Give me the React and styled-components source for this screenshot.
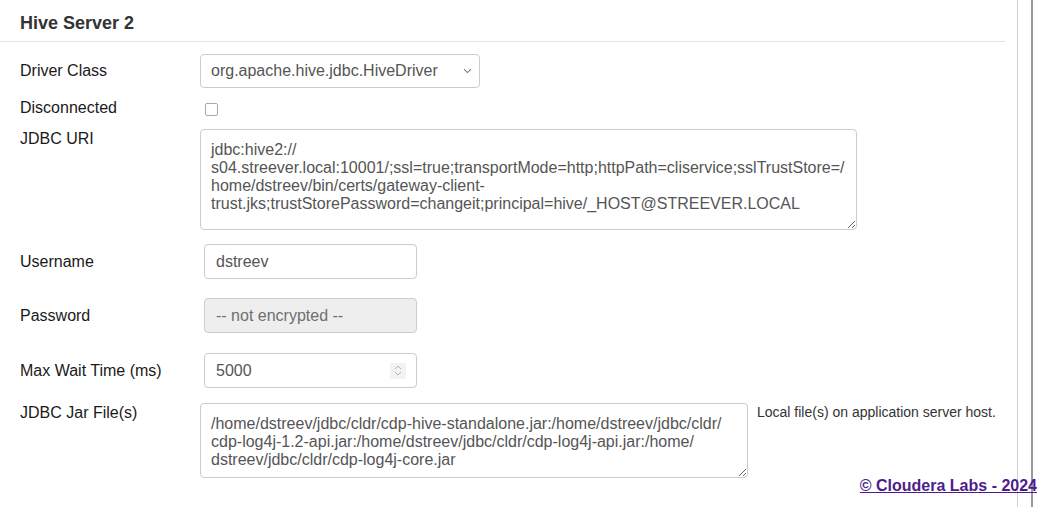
import React from 'react';
import styled, { createGlobalStyle } from 'styled-components';

const GlobalStyle = createGlobalStyle`
    html, body {
        margin: 0;
        padding: 0;
        background: #ffffff;
        font-family: "Liberation Sans", Arial, Helvetica, sans-serif;
    }
`

const Page = styled.div`
    position: relative;
    display: flex;
    height: 507px;
    overflow: hidden;
`

const Main = styled.div`
    flex: 1;
    border-right: 1px solid #cfcfcf;
`

const Section = styled.div`
    margin-right: 12px;
`

const Title = styled.h2`
    margin: 0;
    padding: 13px 0 8px 20px;
    font-size: 18px;
    line-height: 20px;
    font-weight: bold;
    color: #333333;
    border-bottom: 1px solid #e3e3e3;
`

const Form = styled.div`
    padding-left: 20px;
`

const Row = styled.div`
    display: flex;
    align-items: ${(p) => (p.top ? 'flex-start' : 'center')};
    min-height: 18px;
    margin-top: ${(p) => p.gap}px;
`

const Label = styled.div`
    width: 180px;
    flex: none;
    font-size: 16px;
    line-height: 18px;
    color: #1a1a1a;
    padding-top: ${(p) => (p.top ? 1 : 0)}px;
`

const Field = styled.div`
    display: flex;
    align-items: flex-start;
    padding-left: ${(p) => p.inset || 0}px;
`

const SelectBox = styled.div`
    display: flex;
    align-items: center;
    justify-content: space-between;
    box-sizing: border-box;
    width: 280px;
    height: 34px;
    padding: 0 7px 0 10px;
    border: 1px solid #cccccc;
    border-radius: 4px;
    background: #ffffff;
    font-size: 16px;
    color: #555555;
`

const Check = styled.input`
    appearance: none;
    margin: 3px 0 0 5px;
    width: 13px;
    height: 13px;
    border: 1px solid #a9a9a9;
    border-radius: 2px;
    background: #ffffff;
`

const TextArea = styled.textarea`
    box-sizing: border-box;
    width: ${(p) => p.w}px;
    height: ${(p) => p.h}px;
    padding: 11px 10px 7px;
    border: 1px solid #cccccc;
    border-radius: 4px;
    font-family: "Liberation Sans", Arial, Helvetica, sans-serif;
    font-size: 16px;
    line-height: 18px;
    color: #555555;
    resize: both;
    overflow: hidden;
    white-space: pre;
    outline: none;
`

const Input = styled.input`
    box-sizing: border-box;
    width: 213px;
    height: 35px;
    padding: 0 11px;
    border: 1px solid #cccccc;
    border-radius: 4px;
    background: ${(p) => (p.disabled ? '#eeeeee' : '#ffffff')};
    font-family: "Liberation Sans", Arial, Helvetica, sans-serif;
    font-size: 16px;
    color: ${(p) => (p.disabled ? '#6f6f6f' : '#555555')};
    outline: none;
    &::placeholder {
        color: #6f6f6f;
    }
`

const NumberBox = styled.div`
    display: flex;
    align-items: center;
    box-sizing: border-box;
    width: 213px;
    height: 35px;
    padding: 0 10px 0 11px;
    border: 1px solid #cccccc;
    border-radius: 4px;
    font-size: 16px;
    color: #555555;
`

const NumberValue = styled.span`
    flex: 1;
`

const Spinner = styled.div`
    display: flex;
    align-items: center;
    justify-content: center;
    width: 16px;
    height: 16px;
    background: #f3f3f3;
`

const Help = styled.span`
    margin-left: 9px;
    margin-top: 1px;
    font-size: 14px;
    line-height: 16px;
    color: #333333;
`

const Rail = styled.div`
    width: 8px;
    margin-left: 13px;
    border-left: 2px solid #9a9a9a;
`

const Footer = styled.a`
    position: absolute;
    right: 4px;
    bottom: 12px;
    font-size: 16px;
    font-weight: bold;
    color: #4d1c8c;
    text-decoration: underline;
`

const uri = 'jdbc:hive2://\ns04.streever.local:10001/;ssl=true;transportMode=http;httpPath=cliservice;sslTrustStore=/\nhome/dstreev/bin/certs/gateway-client-\ntrust.jks;trustStorePassword=changeit;principal=hive/_HOST@STREEVER.LOCAL';

const jars = '/home/dstreev/jdbc/cldr/cdp-hive-standalone.jar:/home/dstreev/jdbc/cldr/\ncdp-log4j-1.2-api.jar:/home/dstreev/jdbc/cldr/cdp-log4j-api.jar:/home/\ndstreev/jdbc/cldr/cdp-log4j-core.jar';

function Chevron() {
    return (
        <svg width="9" height="6" viewBox="0 0 9 6">
            <path d="M1 1.2 L4.5 4.6 L8 1.2" fill="none" stroke="#7a7a7a" strokeWidth="1.1" />
        </svg>
    )
}

function StepArrows() {
    return (
        <svg width="8" height="13" viewBox="0 0 8 13">
            <path d="M1 5 L4 2 L7 5" fill="none" stroke="#b4b4b4" strokeWidth="1" />
            <path d="M1 8 L4 11 L7 8" fill="none" stroke="#b4b4b4" strokeWidth="1" />
        </svg>
    )
}

export default function App() {
    return (
        <>
        <GlobalStyle />
        <Page>
            <Main>
                <Section>
                    <Title>Hive Server 2</Title>
                    <Form>
                        <Row gap={12}>
                            <Label>Driver Class</Label>
                            <SelectBox>
                                org.apache.hive.jdbc.HiveDriver
                                <Chevron />
                            </SelectBox>
                        </Row>
                        <Row gap={11}>
                            <Label>Disconnected</Label>
                            <Check type="checkbox" />
                        </Row>
                        <Row gap={12} top>
                            <Label top>JDBC URI</Label>
                            <TextArea w={657} h={101} defaultValue={uri} />
                        </Row>
                        <Row gap={14}>
                            <Label>Username</Label>
                            <Field inset={4}>
                                <Input defaultValue="dstreev" />
                            </Field>
                        </Row>
                        <Row gap={19}>
                            <Label>Password</Label>
                            <Field inset={4}>
                                <Input disabled placeholder="-- not encrypted --" />
                            </Field>
                        </Row>
                        <Row gap={20}>
                            <Label>Max Wait Time (ms)</Label>
                            <Field inset={4}>
                                <NumberBox>
                                    <NumberValue>5000</NumberValue>
                                    <Spinner><StepArrows /></Spinner>
                                </NumberBox>
                            </Field>
                        </Row>
                        <Row gap={15} top>
                            <Label top>JDBC Jar File(s)</Label>
                            <Field>
                                <TextArea w={548} h={75} defaultValue={jars} />
                                <Help>Local file(s) on application server host.</Help>
                            </Field>
                        </Row>
                    </Form>
                </Section>
            </Main>
            <Rail />
            <Footer href="#">© Cloudera Labs - 2024</Footer>
        </Page>
        </>
    )
}
